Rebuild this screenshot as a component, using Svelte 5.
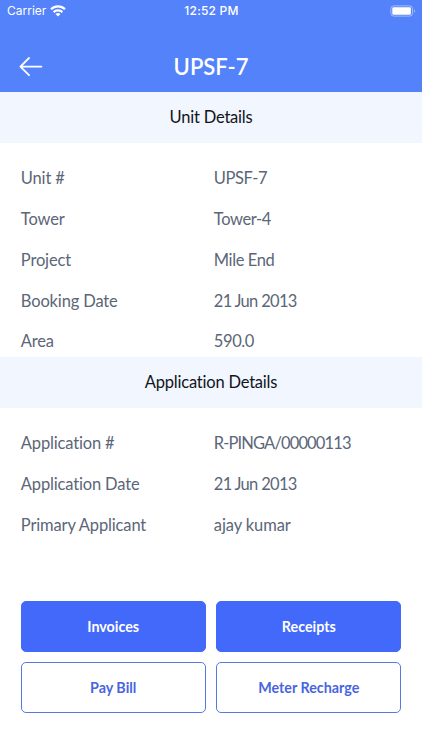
<script>
  let unitDetails = [
    {label: 'Unit #', value: 'UPSF-7'},
    {label: 'Tower', value: 'Tower-4'},
    {label: 'Project', value: 'Mile End'},
    {label: 'Booking Date', value: '21 Jun 2013', kind: 'date'},
    {label: 'Area', value: '590.0'}
  ];

  let applicationDetails = [
    {label: 'Application #', value: 'R-PINGA/00000113', kind: 'code'},
    {label: 'Application Date', value: '21 Jun 2013', kind: 'date'},
    {label: 'Primary Applicant', value: 'ajay kumar', kind: 'name'}
  ];

  let sections = [
    {title: 'Unit Details', rows: unitDetails},
    {title: 'Application Details', rows: applicationDetails}
  ];
</script>

<div class="screen">
  <header>
    <div class="status">
      <div class="carrier">
        <span>Carrier</span>
        <svg width="16" height="12" viewBox="0 0 16 12" fill="none" stroke="#fff" stroke-width="2.2">
          <path d="M1 4.2a10 10 0 0 1 14 0" />
          <path d="M3.6 7.1a6.3 6.3 0 0 1 8.8 0" />
          <path d="M8 11.6 5.5 9.1a3.6 3.6 0 0 1 5 0z" fill="#fff" stroke="none" />
        </svg>
      </div>
      <span class="time">12:52 PM</span>
      <svg class="battery" width="26" height="12" viewBox="0 0 26 12">
        <rect x="0.9" y="0.9" width="21.6" height="10.2" rx="2.8" fill="none" stroke="#fff" stroke-opacity=".45" />
        <rect x="2.3" y="2.3" width="18.6" height="7.4" rx="1.2" fill="#fff" />
        <path d="M24 4.2v3.6c1.2-.6 1.2-3 0-3.6z" fill="#fff" fill-opacity=".55" />
      </svg>
    </div>
    <div class="navbar">
      <button class="back" aria-label="Back">
        <svg width="24" height="20" viewBox="0 0 24 20" fill="none" stroke="#fff" stroke-width="1.8" stroke-linecap="round" stroke-linejoin="round">
          <path d="M22.4 9.6H1.4M10 1 1.4 9.6l8.6 8.6" />
        </svg>
      </button>
      <h1>UPSF-7</h1>
    </div>
  </header>

  {#each sections as section}
    <h2>{section.title}</h2>
    <dl>
      {#each section.rows as row}
        <div class="row">
          <dt>{row.label}</dt>
          <dd class={row.kind}>{row.value}</dd>
        </div>
      {/each}
    </dl>
  {/each}

  <div class="actions">
    <button class="filled">Invoices</button>
    <button class="filled">Receipts</button>
    <button>Pay Bill</button>
    <button>Meter Recharge</button>
  </div>
</div>

<style>
  :global(body){
    margin: 0;
    background-color: #fff;
  }

  .screen{
    width: 422px;
    height: 750px;
    box-sizing: border-box;
    display: flex;
    flex-direction: column;
    overflow: hidden;
    font-family: Lato, sans-serif;
    font-variant-ligatures: none;
  }

  header{
    height: 92px;
    flex-shrink: 0;
    background-color: #5482fa;
    color: #fff;
  }

  .status{
    height: 21px;
    padding: 0 6px 0 7px;
    display: grid;
    grid-template-columns: 1fr auto 1fr;
    align-items: center;
    font-family: Inter, sans-serif;
    font-size: 12px;
  }

  .carrier{
    display: flex;
    align-items: center;
    gap: 4px;
  }

  .time{
    font-weight: 500;
    letter-spacing: .2px;
  }

  .battery{
    justify-self: end;
  }

  .navbar{
    height: 70px;
    padding: 0 19px;
    box-sizing: border-box;
    display: grid;
    grid-template-columns: 1fr auto 1fr;
    align-items: center;
    padding-top: 21px;
  }

  .back{
    width: 24px;
    height: 20px;
    padding: 0;
    border: 0;
    background: none;
    cursor: pointer;
  }

  .back svg{
    display: block;
  }

  h1{
    margin: 0;
    font-size: 22px;
    font-weight: 600;
    line-height: 26px;
  }

  h2{
    height: 50.6px;
    margin: 0;
    flex-shrink: 0;
    background-color: #f2f6fe;
    color: #10141c;
    font-size: 16.5px;
    font-weight: 400;
    letter-spacing: -.2px;
    line-height: 50px;
    text-align: center;
  }

  dl{
    margin: 0;
    padding: 25.6px 20.8px 5.6px;
    display: flex;
    flex-direction: column;
    gap: 20.8px;
  }

  .row{
    display: flex;
    color: #5b6678;
    font-size: 16.5px;
    letter-spacing: -.15px;
    line-height: 20px;
  }

  dt{
    width: 193px;
  }

  dd{
    margin: 0;
    letter-spacing: -.4px;
  }

  .date{
    letter-spacing: -.7px;
  }

  .code{
    letter-spacing: -.87px;
  }

  .name{
    letter-spacing: -.1px;
  }

  .actions{
    margin-top: auto;
    padding: 0 20.6px 37px;
    display: grid;
    grid-template-columns: 1fr 1fr;
    gap: 10.4px;
  }

  .actions button{
    height: 50.8px;
    padding: 0;
    border: 1px solid #5878e6;
    border-radius: 5px;
    background-color: #fff;
    color: #4865df;
    font-family: inherit;
    font-size: 14.3px;
    font-weight: 700;
    cursor: pointer;
  }

  .actions .filled{
    border-color: #4269fa;
    background-color: #4269fa;
    color: #fff;
  }
</style>
